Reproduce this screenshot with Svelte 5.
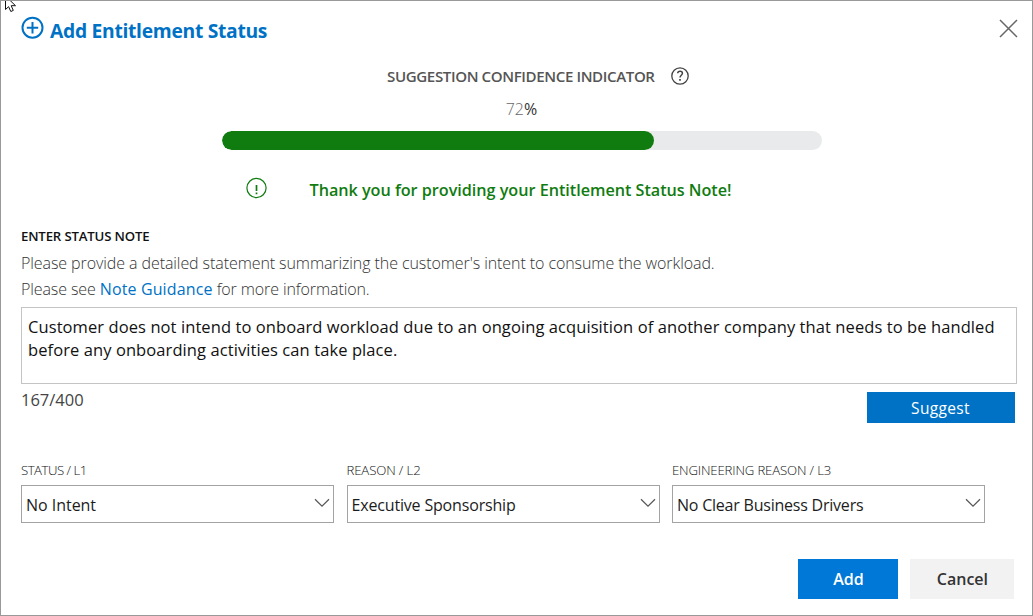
<script>
  let confidence = $state(72);
  let note = $state('Customer does not intend to onboard workload due to an ongoing acquisition of another company that needs to be handled before any onboarding activities can take place.');
  const fields = [
    { label: 'STATUS / L1', value: 'No Intent', labelGap: -0.5, gap: -0.03 },
    { label: 'REASON / L2', value: 'Executive Sponsorship', labelGap: -0.13, gap: -0.17 },
    { label: 'ENGINEERING REASON / L3', value: 'No Clear Business Drivers', labelGap: -0.16, gap: -0.22 }
  ];
</script>

<div class="dialog">
  <svg class="cursor" width="18" height="14" viewBox="0 0 18 14">
    <path d="M5.5 -4V9.5L8.6 6.7L10.8 11.5L13.3 10.4L11.2 5.7H15.5L5.5 -4Z" fill="#fff" stroke="#111" stroke-width="1" />
  </svg>

  <header>
    <svg class="plus" width="24" height="24" viewBox="0 0 24 24" fill="none" stroke="#0072c6">
      <circle cx="11.5" cy="11.7" r="10" stroke-width="2" />
      <path d="M11.5 6V17.4M5.8 11.7H17.2" stroke-width="2" />
    </svg>
    <h1>Add Entitlement Status</h1>
    <button class="close" aria-label="Close">
      <svg width="20" height="20" viewBox="0 0 20 20" fill="none" stroke="#666" stroke-width="1.5">
        <path d="M1 1L18 18M18 1L1 18" />
      </svg>
    </button>
  </header>

  <section class="indicator">
    <div class="caption">
      <span>SUGGESTION CONFIDENCE INDICATOR</span>
      <svg width="20" height="20" viewBox="0 0 20 20" fill="none" stroke="#444">
        <circle cx="10" cy="10" r="8.2" stroke-width="1.3" />
        <path d="M7.7 7.3C7.8 6 8.7 5.3 10.1 5.3C11.5 5.3 12.4 6.1 12.4 7.3C12.4 9.2 10 9.4 10 11.6" stroke-width="1.5" />
        <path d="M10 13V14.7" stroke-width="1.7" />
      </svg>
    </div>
    <div class="percent"><span>{confidence}</span>%</div>
    <div class="track"><div class="fill" style="width: {confidence}%"></div></div>
    <div class="thanks">
      <svg width="22" height="22" viewBox="0 0 22 22" fill="none" stroke="#107c10">
        <circle cx="10.5" cy="11" r="9.6" stroke-width="1.2" />
        <path d="M10.5 8V14M10.5 15.5V17.2" stroke-width="1.7" />
      </svg>
      <span>Thank you for providing your Entitlement Status Note!</span>
    </div>
  </section>

  <section class="note">
    <h2>ENTER STATUS NOTE</h2>
    <p class="first">Please provide a detailed statement summarizing the customer's intent to consume the workload.</p>
    <p>Please see <a href="#guidance">Note Guidance</a> for more information.</p>
    <div class="area">{note}</div>
    <div class="under">
      <span class="count">{note.length}/400</span>
      <button class="suggest">Suggest</button>
    </div>
  </section>

  <section class="fields">
    {#each fields as f}
      <div class="field">
        <div class="label" style="letter-spacing: {f.labelGap}px">{f.label}</div>
        <div class="select">
          <span style="letter-spacing: {f.gap}px">{f.value}</span>
          <svg width="16" height="10" viewBox="0 0 16 10" fill="none" stroke="#555" stroke-width="1.2">
            <path d="M1 1.3L8 8.2L15 1.3" />
          </svg>
        </div>
      </div>
    {/each}
  </section>

  <footer>
    <button class="add">Add</button>
    <button class="cancel">Cancel</button>
  </footer>
</div>

<style>
  .dialog {
    position: relative;
    box-sizing: border-box;
    width: 1033px;
    height: 616px;
    border: 1px solid #999;
    background: #fff;
    overflow: hidden;
    font-family: "Open Sans", "Noto Sans", sans-serif;
    color: #1c1c1c;
  }
  .cursor { position: absolute; left: -1px; top: -1px; }
  h1, h2, p { margin: 0; }
  button { border: 0; padding: 0; border-radius: 0; font-family: inherit; }
  header { display: flex; align-items: flex-start; height: 63px; padding: 0 13px 0 20px; }
  .plus { margin-top: 15px; }
  h1 {
    margin: 17px 0 0 5px;
    font-size: 19.3px;
    line-height: 26px;
    font-weight: 700;
    letter-spacing: -0.3px;
    color: #0072c6;
  }
  .close { margin: 18px 0 0 auto; width: 20px; height: 20px; background: none; }
  .close svg { display: block; }
  .indicator { width: 600px; margin-left: 220.5px; }
  .caption {
    display: flex;
    align-items: center;
    justify-content: space-between;
    height: 24px;
    padding: 0 131.5px 0 165.5px;
    font-size: 15.1px;
    font-weight: 600;
    letter-spacing: -0.39px;
    color: #555;
    white-space: nowrap;
  }
  .percent {
    margin-top: 8px;
    text-align: center;
    font-size: 16px;
    line-height: 26px;
    letter-spacing: 0.2px;
    color: #333;
  }
  .percent span { font-weight: 300; color: #666; letter-spacing: 0; }
  .track { margin-top: 9px; height: 19px; border-radius: 10px; background: #e8eaeb; overflow: hidden; }
  .fill { height: 100%; border-radius: 10px; background: #107c10; }
  .thanks {
    display: flex;
    gap: 41.5px;
    margin-top: 26px;
    padding-left: 24.5px;
    font-size: 16.2px;
    line-height: 29px;
    font-weight: 600;
    letter-spacing: -0.02px;
    color: #107c10;
    white-space: nowrap;
  }
  .thanks svg { margin-top: 1px; flex: none; }
  .note { margin: 22px 15px 0 20px; }
  h2 { font-size: 13.2px; line-height: 19px; font-weight: 600; letter-spacing: -0.16px; color: #111; }
  p { font-size: 16px; line-height: 26px; font-weight: 300; color: #333; letter-spacing: -0.1px; }
  p.first { margin-top: 4px; letter-spacing: -0.08px; }
  a { color: #0072c6; font-weight: 400; letter-spacing: 0.13px; text-decoration: none; }
  .area {
    box-sizing: border-box;
    height: 77px;
    margin-top: 5px;
    padding: 7px 6px;
    border: 1px solid #c4c4c4;
    font-size: 16.5px;
    line-height: 23px;
    letter-spacing: 0.085px;
    color: #111;
  }
  .under { display: flex; justify-content: space-between; height: 39px; }
  .count { margin-top: 2px; font-size: 16.5px; line-height: 28px; color: #444; }
  .suggest {
    width: 148px;
    height: 31px;
    margin: 8px 2.5px 0 0;
    padding-top: 2px;
    background: #0072c6;
    color: #fff;
    font-size: 15.5px;
    line-height: 29px;
    letter-spacing: 0.35px;
  }
  .fields { display: flex; gap: 12.5px; margin: 37px 0 0 20px; }
  .field { width: 313px; }
  .label { font-size: 13.2px; line-height: 20px; font-weight: 300; color: #111; }
  .select {
    display: flex;
    align-items: center;
    justify-content: space-between;
    box-sizing: border-box;
    height: 38px;
    margin-top: 5px;
    padding: 1px 3px 0 4px;
    border: 1px solid #a3a3a3;
    font-size: 16px;
    color: #1c1c1c;
  }
  .select svg { margin-top: -3px; }
  footer { display: flex; justify-content: flex-end; gap: 12px; margin: 36px 17.6px 0 0; }
  footer button { height: 40px; font-size: 16px; font-weight: 600; }
  .add { width: 100px; background: #0078d7; color: #fff; }
  .cancel { width: 104px; background: #f2f2f2; color: #333; }
</style>
